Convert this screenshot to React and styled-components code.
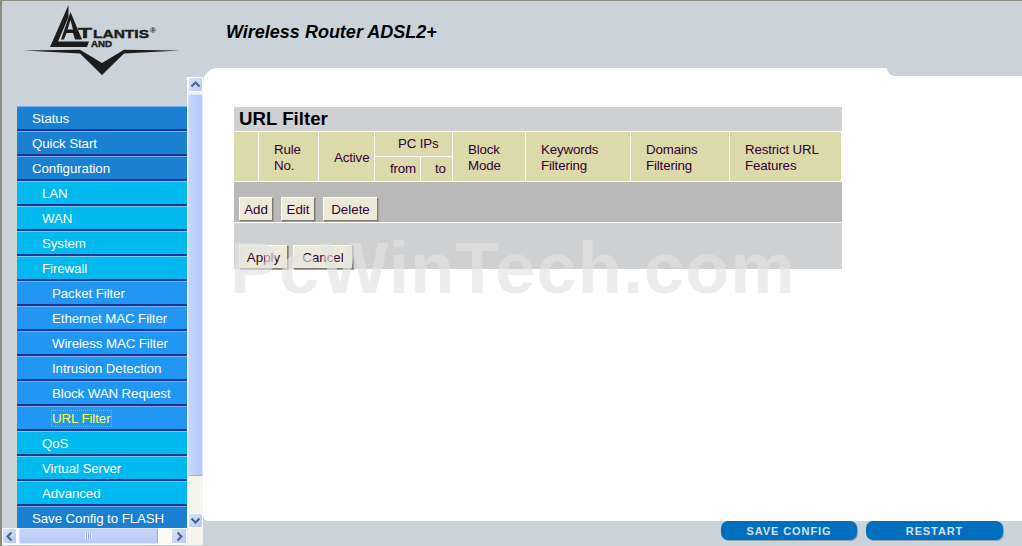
import React from 'react';
import styled, { createGlobalStyle } from 'styled-components';

const GlobalStyle = createGlobalStyle`
  html, body {
    margin: 0;
    padding: 0;
    height: 100%;
    overflow: hidden;
    background: #cbd3da;
    font-family: "Liberation Sans", Arial, sans-serif;
  }
`;

const Page = styled.div`
  position: relative;
  width: 1022px;
  height: 546px;
  box-sizing: border-box;
  border-top: 1px solid #8c8c7c;
  border-left: 2px solid #8c8c7c;
  background: #cbd3da;
  overflow: hidden;
`;

const Header = styled.header`
  display: flex;
  align-items: flex-start;
  height: 67px;
`;

const LogoSvg = styled.svg`
  flex: none;
  display: block;
  margin: 1px 0 0 18px;
  overflow: visible;
`;

const Title = styled.h1`
  margin: 21px 0 0 36px;
  font-size: 18px;
  line-height: 21px;
  font-weight: bold;
  font-style: italic;
  color: #000;
`;

const Main = styled.div`
  display: flex;
  height: 478px;
`;

const Side = styled.aside`
  flex: none;
  width: 201px;
  display: flex;
  flex-direction: column;
`;

const SideTop = styled.div`
  display: flex;
  height: 460px;
`;

const MenuWrap = styled.div`
  width: 170px;
  margin: 38px 0 0 15px;
  height: 423px;
  overflow: hidden;
`;

const levelColors = ['#1a80d2', '#00b9ee', '#2196f3'];

const MenuItem = styled.div`
  box-sizing: border-box;
  height: 25px;
  padding-left: ${(p) => 15 + p.$level * 10}px;
  background: ${(p) => levelColors[p.$level]};
  border-top: 1px solid ${(p) => (p.$level === 1 ? '#6fd0f5' : '#78aef0')};
  border-bottom: 2px solid #1b3596;
  color: #fff;
  font-size: 13.33px;
  letter-spacing: -0.1px;
  line-height: 23px;
  white-space: nowrap;
`;

const ActiveLabel = styled.span`
  color: #ffff40;
  outline: 1px dotted #e0a050;
`;

const VScroll = styled.div`
  width: 15px;
  height: 451px;
  margin: 9px 0 0 1px;
  display: flex;
  flex-direction: column;
  background: #f6f5ec;
  box-shadow: -1px 0 0 #fff;
`;

const ArrowButton = styled.div`
  flex: none;
  box-sizing: border-box;
  width: ${(p) => p.$w || 15}px;
  height: ${(p) => p.$h || 15}px;
  display: flex;
  align-items: center;
  justify-content: center;
  background: linear-gradient(135deg, #d8e2fc, #b8c9f8);
  border: 1px solid #fff;
  border-radius: 2px;
`;

const VThumb = styled.div`
  box-sizing: border-box;
  height: 382px;
  margin-top: 2px;
  background: linear-gradient(90deg, #c6d4fb, #b9cafa);
  border: 1px solid #d9e3fd;
  border-bottom-color: #98aee0;
  border-radius: 2px;
`;

const VSpacer = styled.div`
  flex: 1;
`;

const HScrollRow = styled.div`
  display: flex;
  height: 17px;
`;

const HScroll = styled.div`
  width: 185px;
  display: flex;
  align-items: flex-start;
  background: #fbfaf5;
  box-sizing: border-box;
`;

const HThumb = styled.div`
  box-sizing: border-box;
  width: 139px;
  height: 16px;
  margin: 0 13px 0 2px;
  display: flex;
  align-items: center;
  justify-content: center;
  background: linear-gradient(180deg, #c6d4fb, #b9cafa);
  border: 1px solid #d9e3fd;
  border-right-color: #98aee0;
  border-radius: 2px;
`;

const Grip = styled.div`
  width: 7px;
  height: 6px;
  background: repeating-linear-gradient(90deg, #eef2fe 0 1px, #8ea4da 1px 2px);
`;

const Corner = styled.div`
  flex: 1;
  background: #f6f5ec;
`;

const Right = styled.div`
  position: relative;
  flex: 1;
  display: flex;
  flex-direction: column;
`;

const Content = styled.main`
  position: relative;
  height: 453px;
  box-sizing: border-box;
  padding: 39px 0 0 31px;
  background: #fff;
  border-radius: 15px 0 0 5px;
  overflow: hidden;
`;

const HeaderTab = styled.div`
  position: absolute;
  top: 0;
  right: 0;
  width: 135px;
  height: 8px;
  background: #cbd3da;
  border-bottom-left-radius: 8px;
`;

const Panel = styled.div`
  width: 608px;
`;

const PanelTitle = styled.h2`
  margin: 0;
  height: 25px;
  padding-left: 5px;
  background: #cfd0d2;
  color: #000;
  font-size: 18.67px;
  line-height: 24px;
  font-weight: bold;
  border-bottom: 1px solid #fff;
  box-sizing: border-box;
`;

const HeadGrid = styled.div`
  display: grid;
  grid-template-columns: 24px 59px 55px 45px 31px 72px 104px 98px 111px;
  grid-template-rows: 24px 24px;
  gap: 1px;
  width: 607px;
  background: #fff;
`;

const HeadCell = styled.div`
  display: flex;
  align-items: center;
  box-sizing: border-box;
  padding-left: ${(p) => p.$pad || 0}px;
  padding-top: ${(p) => (p.$row ? 0 : 2)}px;
  background: #dcd9ab;
  color: #330033;
  font-size: 13.33px;
  letter-spacing: -0.15px;
  line-height: 16px;
  grid-row: ${(p) => p.$row || '1 / span 2'};
  grid-column: ${(p) => p.$col || 'auto'};
`;

const ButtonBar = styled.div`
  display: flex;
  align-items: flex-start;
  height: 40px;
  box-sizing: border-box;
  margin-top: 1px;
  padding: 15px 0 0 5px;
  gap: ${(p) => p.$gap || 8}px;
  background: #b9b9b9;
`;

const ActionBar = styled(ButtonBar)`
  height: 46px;
  padding-top: 22px;
  background: #cfd0d2;
`;

const Btn = styled.button`
  box-sizing: border-box;
  width: ${(p) => p.$w}px;
  height: 24px;
  padding: 0;
  background: #ece9d8;
  border: 1px solid;
  border-color: #fff #7c7c70 #7c7c70 #fff;
  box-shadow: 1px 1px 0 #9c9c90;
  color: #330033;
  font-family: inherit;
  font-size: 13.33px;
`;

const Watermark = styled.div`
  position: absolute;
  left: 27px;
  top: 159px;
  font-size: 72px;
  line-height: 83px;
  letter-spacing: 1.2px;
  font-weight: bold;
  white-space: nowrap;
  color: rgba(226, 226, 226, 0.66);
  pointer-events: none;
`;

const BottomBar = styled.footer`
  flex: 1;
  display: flex;
  justify-content: flex-end;
  gap: 9px;
  padding-right: 19px;
`;

const PillButton = styled.button`
  width: ${(p) => p.$w}px;
  height: 19px;
  padding: 0;
  border: 0;
  border-radius: 7px;
  background: #0070be;
  box-shadow: 1px 1px 0 #9aa3ab;
  color: #cfe0f0;
  font-family: inherit;
  font-size: 11px;
  font-weight: bold;
  letter-spacing: 0.9px;
`;

const menuItems = [
  ['Status', 0],
  ['Quick Start', 0],
  ['Configuration', 0],
  ['LAN', 1],
  ['WAN', 1],
  ['System', 1],
  ['Firewall', 1],
  ['Packet Filter', 2],
  ['Ethernet MAC Filter', 2],
  ['Wireless MAC Filter', 2],
  ['Intrusion Detection', 2],
  ['Block WAN Request', 2],
  ['URL Filter', 2, true],
  ['QoS', 1],
  ['Virtual Server', 1],
  ['Advanced', 1],
  ['Save Config to FLASH', 0],
];

function Chevron({ dir }) {
  const paths = {
    up: 'M1.5 7.5 L5.5 3.5 L9.5 7.5',
    down: 'M1.5 3.5 L5.5 7.5 L9.5 3.5',
    left: 'M7.5 1.5 L3.5 5.5 L7.5 9.5',
    right: 'M3.5 1.5 L7.5 5.5 L3.5 9.5',
  };
  return (
    <svg width="11" height="11" viewBox="0 0 11 11">
      <path d={paths[dir]} fill="none" stroke="#4d6185" strokeWidth="2" />
    </svg>
  );
}

function Logo() {
  const ink = '#1c1c1c';
  return (
    <LogoSvg width="170" height="76" viewBox="0 0 170 76" fontFamily="Liberation Sans" fontWeight="bold" fill={ink}>
      <path d="M48.5 3 L30 45 L67 45 L69 39.5 L38 39.5 L48.5 15 Z" />
      <path
        fillRule="evenodd"
        d="M50.5 10 L62 37.5 L55 37.5 L53 31 L46.5 31 L44 37.5 L41 37.5 Z M50.5 18 L47.5 27.5 L53 27.5 Z"
      />
      <path d="M4 48.6 L60 47.8 L82 61 L104 47.8 L160 48.6 L104 51.4 L82 73 L60 51.4 Z" />
      <g stroke={ink} strokeWidth="0.4">
        <text x="58" y="35.5" fontSize="14" textLength="14" lengthAdjust="spacingAndGlyphs">T</text>
        <text x="73" y="36" fontSize="11" textLength="56" lengthAdjust="spacingAndGlyphs">LANTIS</text>
        <text x="71" y="45" fontSize="8.5" textLength="21" lengthAdjust="spacingAndGlyphs">AND</text>
      </g>
      <text x="130" y="31" fontSize="8">®</text>
    </LogoSvg>
  );
}

function App() {
  return (
    <Page>
      <GlobalStyle />
      <Header>
        <Logo />
        <Title>Wireless Router ADSL2+</Title>
      </Header>
      <Main>
        <Side>
          <SideTop>
            <MenuWrap>
              {menuItems.map(([label, level, active]) => (
                <MenuItem key={label} $level={level}>
                  {active ? <ActiveLabel>{label}</ActiveLabel> : label}
                </MenuItem>
              ))}
            </MenuWrap>
            <VScroll>
              <ArrowButton><Chevron dir="up" /></ArrowButton>
              <VThumb />
              <VSpacer />
              <ArrowButton><Chevron dir="down" /></ArrowButton>
            </VScroll>
          </SideTop>
          <HScrollRow>
            <HScroll>
              <ArrowButton $h={16}><Chevron dir="left" /></ArrowButton>
              <HThumb><Grip /></HThumb>
              <ArrowButton $w={16} $h={16}><Chevron dir="right" /></ArrowButton>
            </HScroll>
            <Corner />
          </HScrollRow>
        </Side>
        <Right>
          <Content>
            <HeaderTab />
            <Panel>
              <PanelTitle>URL Filter</PanelTitle>
              <HeadGrid>
                <HeadCell />
                <HeadCell $pad={15}>Rule<br />No.</HeadCell>
                <HeadCell $pad={15}>Active</HeadCell>
                <HeadCell $pad={23} $row="1" $col="4 / span 2">PC IPs</HeadCell>
                <HeadCell $pad={15} $row="2" $col="4">from</HeadCell>
                <HeadCell $pad={14} $row="2" $col="5">to</HeadCell>
                <HeadCell $pad={15} $col="6">Block<br />Mode</HeadCell>
                <HeadCell $pad={15} $col="7">Keywords<br />Filtering</HeadCell>
                <HeadCell $pad={15} $col="8">Domains<br />Filtering</HeadCell>
                <HeadCell $pad={15} $col="9">Restrict URL<br />Features</HeadCell>
              </HeadGrid>
              <ButtonBar>
                <Btn $w={34}>Add</Btn>
                <Btn $w={34}>Edit</Btn>
                <Btn $w={55}>Delete</Btn>
              </ButtonBar>
              <ActionBar $gap={5}>
                <Btn $w={49}>Apply</Btn>
                <Btn $w={60}>Cancel</Btn>
              </ActionBar>
            </Panel>
            <Watermark>PcWinTech.com</Watermark>
          </Content>
          <BottomBar>
            <PillButton $w={136}>SAVE CONFIG</PillButton>
            <PillButton $w={137}>RESTART</PillButton>
          </BottomBar>
        </Right>
      </Main>
    </Page>
  );
}

export default App;
